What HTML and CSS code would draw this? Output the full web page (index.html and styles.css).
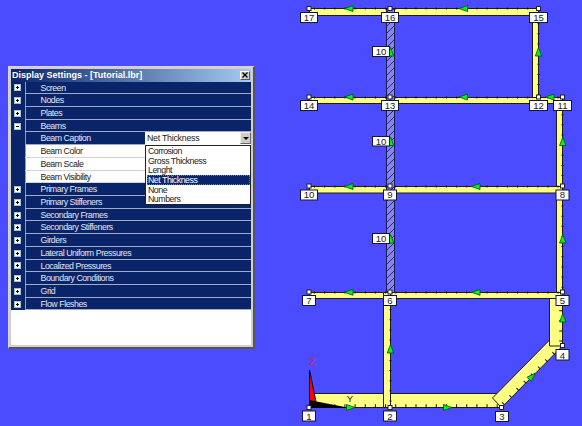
FILE: index.html
```
<!DOCTYPE html>
<html lang="en">
<head>
<meta charset="utf-8">
<title>Display Settings</title>
<link rel="stylesheet" href="styles.css">
</head>
<body>
<svg class="model" width="582" height="426" viewBox="0 0 582 426">
  <defs>
    <pattern id="hatch" width="7" height="7" patternUnits="userSpaceOnUse">
      <path d="M-1 8L8 -1M-1 1L1 -1M6 8L8 6" stroke="#29296e" stroke-width="1"/>
    </pattern>
    <path id="left" d="M-4.5 0L4 -3V3Z"/>
    <path id="up" d="M0 -4.5L3.2 4H-3.2Z"/>
    <path id="right" d="M4.5 0L-4 -3V3Z"/>
    <rect id="node" x="-2" y="-2" width="4" height="4"/>
  </defs>
  <g class="beam">
    <path d="M309.5 393.5H498L501.5 407.5H309.5Z"/>
    <path d="M492.5 398L553 336.500L562.500 346L501.500 407.500Z"/>
    <path d="M549.5 292.500H562.500V346H549.500Z"/>
    <path d="M556.500 97.500H562.500V292.500H556.500Z"/>
    <path d="M532.500 9H538.500V97.500H532.500Z"/>
    <path d="M309.500 8.500H538.500V15.500H309.500Z"/>
    <path d="M309.500 97.500H562.500V103.500H309.500Z"/>
    <path d="M309.500 186.500H562.500V193H309.500Z"/>
    <path d="M309.500 292.500H562.500V298.500H309.500Z"/>
    <path d="M383.500 292.500H390.500V407.500H383.500Z"/>
  </g>
  <g class="hatched">
    <path class="base" d="M386.500 9H394.500V292.500H386.500Z"/>
    <path fill="url(#hatch)" d="M386.500 9H394.500V292.500H386.500Z"/>
  </g>
  <g class="ticks">
    <path d="M314 8.500H538M314 97.500H562M314 186.500H562M314 292.500H562M538.500 13V97M562.500 104V290M390.500 299V405"/>
    <path class="long" d="M314 406H498M561 300V344M503 404L560 347"/>
  </g>
  <path d="M309.500 370V402H316Z" fill="#f00" stroke="#000"/>
  <path d="M309 400L350 408H309Z"/>
  <g class="arrows">
    <use href="#left" x="349" y="8.500"/><use href="#left" x="463.500" y="8.500"/>
    <use href="#left" x="349" y="97"/><use href="#left" x="463.500" y="97"/><use href="#left" x="550" y="97"/>
    <use href="#left" x="349" y="186.500"/><use href="#left" x="476" y="186.500"/>
    <use href="#left" x="349" y="292.300"/><use href="#left" x="476" y="292.300"/>
    <use href="#up" x="538.500" y="52"/><use href="#up" x="562.800" y="141.500"/><use href="#up" x="562.800" y="239"/>
    <use href="#up" x="562.800" y="318"/><use href="#up" x="390.500" y="349"/>
    <use href="#up" x="390.500" y="52"/><use href="#up" x="390.500" y="141.500"/><use href="#up" x="390.500" y="239"/>
    <use href="#right" x="350.500" y="407.500"/><use href="#right" x="447.500" y="407.500"/>
    <use href="#right" transform="translate(532 376.500) rotate(-45)"/>
  </g>
  <g class="nodes">
    <use href="#node" x="309" y="8.500"/><use href="#node" x="390" y="8.500"/><use href="#node" x="538.500" y="8.500"/>
    <use href="#node" x="309" y="97"/><use href="#node" x="390" y="97"/><use href="#node" x="538.500" y="97"/><use href="#node" x="562.500" y="97"/>
    <use href="#node" x="309" y="186"/><use href="#node" x="390" y="186"/><use href="#node" x="562.500" y="186"/>
    <use href="#node" x="309" y="292"/><use href="#node" x="390" y="292"/><use href="#node" x="562.500" y="292"/>
    <use href="#node" x="309" y="407.500"/><use href="#node" x="390" y="407.500"/><use href="#node" x="501.500" y="407.500"/><use href="#node" x="562.500" y="345.500"/>
  </g>
  <g class="tags">
    <rect x="300.500" y="12.500" width="17" height="10"/><rect x="381.500" y="12.500" width="17" height="10"/><rect x="529.500" y="12.500" width="18" height="10"/>
    <rect x="300.500" y="100.500" width="17" height="10"/><rect x="381.500" y="100.500" width="17" height="10"/><rect x="529.500" y="100.500" width="18" height="10"/><rect x="553.500" y="100.500" width="18" height="10"/>
    <rect x="300.500" y="190" width="17" height="10"/><rect x="383.500" y="190" width="13" height="10"/><rect x="556" y="190" width="13" height="10"/>
    <rect x="302.500" y="295.500" width="13" height="10"/><rect x="383.500" y="295.500" width="13" height="10"/><rect x="556" y="295.500" width="13" height="10"/>
    <rect x="302.500" y="411" width="13" height="10"/><rect x="383.500" y="411" width="13" height="10"/><rect x="495.500" y="411.500" width="13" height="10"/><rect x="556" y="349.500" width="13" height="10.500"/>
    <rect x="372.500" y="46.500" width="17" height="10"/><rect x="372.500" y="136.500" width="17" height="9.500"/><rect x="372.500" y="233.500" width="17" height="10"/>
  </g>
  <g class="labels">
    <text x="309" y="20.500">17</text><text x="390" y="20.500">16</text><text x="538.500" y="20.500">15</text>
    <text x="309" y="109">14</text><text x="390" y="109">13</text><text x="538.500" y="109">12</text><text x="562.500" y="109">11</text>
    <text x="309" y="198">10</text><text x="390" y="198">9</text><text x="562.500" y="198">8</text>
    <text x="309" y="304">7</text><text x="390" y="304">6</text><text x="562.500" y="304">5</text>
    <text x="309" y="419.500">1</text><text x="390" y="419.500">2</text><text x="502" y="420">3</text><text x="562.500" y="358.500">4</text>
    <text x="381" y="55">10</text><text x="381" y="144.500">10</text><text x="381" y="242">10</text>
    <text x="350" y="402">Y</text><text class="z" x="312.500" y="365">Z</text>
  </g>
</svg>

<section class="window">
  <header class="titlebar">
    <span>Display Settings - [Tutorial.lbr]</span>
    <span class="close"><svg width="6" height="6" viewBox="0 0 6 6"><path d="M.5 .5L5.500 5.500M5.500 .5L.5 5.500" stroke="#000" stroke-width="1.400"/></svg></span>
  </header>
  <div class="tree">
    <div class="row"><i class="box plus"></i><span>Screen</span></div>
    <div class="row"><i class="box plus"></i><span>Nodes</span></div>
    <div class="row"><i class="box plus"></i><span>Plates</span></div>
    <div class="row"><i class="box"></i><span>Beams</span></div>
    <div class="row"><span>Beam Caption</span>
      <div class="combo"><b>Net Thickness</b><i class="drop"></i>
        <ul class="menu">
          <li>Corrosion</li><li>Gross Thickness</li><li>Lenght</li><li class="on">Net Thickness</li><li>None</li><li>Numbers</li>
        </ul>
      </div>
    </div>
    <div class="row leaf"><span>Beam Color</span></div>
    <div class="row leaf"><span>Beam Scale</span></div>
    <div class="row leaf"><span>Beam Visibility</span></div>
    <div class="row"><i class="box plus"></i><span>Primary Frames</span></div>
    <div class="row"><i class="box plus"></i><span>Primary Stiffeners</span></div>
    <div class="row"><i class="box plus"></i><span>Secondary Frames</span></div>
    <div class="row"><i class="box plus"></i><span>Secondary Stiffeners</span></div>
    <div class="row"><i class="box plus"></i><span>Girders</span></div>
    <div class="row"><i class="box plus"></i><span>Lateral Uniform Pressures</span></div>
    <div class="row"><i class="box plus"></i><span>Localized Pressures</span></div>
    <div class="row"><i class="box plus"></i><span>Boundary Conditions</span></div>
    <div class="row"><i class="box plus"></i><span>Grid</span></div>
    <div class="row"><i class="box plus"></i><span>Flow Fleshes</span></div>
  </div>
</section>
</body>
</html>
```
FILE: styles.css
```
* { box-sizing: border-box; }
body {
  margin: 0;
  width: 582px;
  height: 426px;
  overflow: hidden;
  position: relative;
  background: #4b4bff;
  font-family: "Liberation Sans", Arial, sans-serif;
  font-size: 8.8px;
}
.model { display: block; }
.beam path { fill: #ffff84; stroke: #1c1c20; stroke-width: 1; }
.hatched path { stroke: #1c1c48; }
.hatched .base { fill: #8484f4; }
.ticks path { fill: none; stroke: #111; stroke-width: 2; stroke-dasharray: 1 9.15; }
.ticks .long { stroke-width: 3.5; }
.arrows use { fill: #00f020; stroke: #064d0c; stroke-width: .8; }
.nodes use { fill: #fff; stroke: #222; stroke-width: 1; }
.tags rect { fill: #fff; stroke: #161630; stroke-width: 1; }
.labels text { font-size: 9.6px; text-anchor: middle; fill: #222; }
.labels .z { fill: #f01840; }

.window {
  position: absolute;
  left: 8px;
  top: 66px;
  width: 247px;
  height: 283px;
  padding: 2px;
  background: #fff;
  border: 1px solid #d8d5cc;
  border-right: 2px solid #55555c;
  border-bottom: 2px solid #55555c;
  box-shadow: inset 0 0 0 2px #d4d0c8;
}
.titlebar {
  display: flex;
  align-items: center;
  justify-content: space-between;
  height: 12.5px;
  padding: 0 1px;
  background: linear-gradient(90deg, #0a246a, #a6caf0);
  color: #fff;
  font: bold 9px "Liberation Sans", Arial, sans-serif;
  white-space: nowrap;
}
.close {
  display: flex;
  align-items: center;
  justify-content: center;
  width: 10px;
  height: 9px;
  background: #d4d0c8;
  border: 1px solid #fff;
  border-right-color: #555;
  border-bottom-color: #555;
}
.tree { display: flex; flex-direction: column; width: 240px; }
.row {
  display: grid;
  grid-template-columns: 14px 120px 1fr;
  height: 12.72px;
  line-height: 12.5px;
  background: #0a246a;
  color: #e4e7f2;
}
.row > span { grid-column: 2; grid-row: 1; padding-left: 14.5px; white-space: nowrap; border-left: 1px solid #8c98bd; letter-spacing: -.46px; }
.row::after {
  content: "";
  grid-column: 2 / 4;
  grid-row: 1;
  align-self: end;
  height: 1px;
  background: #a3abc4;
}
.leaf { background: linear-gradient(90deg, #0a246a 14px, #fff 14px); color: #222; }
.leaf::after { background: #d2d2d2; }
.box {
  grid-column: 1;
  grid-row: 1;
  align-self: center;
  justify-self: start;
  margin-left: 3px;
  width: 7px;
  height: 7px;
  border: 1px solid #a9c4c4;
  background: linear-gradient(#000, #000) center / 3px 1px no-repeat, #fff;
}
.plus { background: linear-gradient(#000, #000) center / 3px 1px no-repeat, linear-gradient(#000, #000) center / 1px 3px no-repeat, #fff; }
.combo {
  grid-column: 3;
  grid-row: 1;
  position: relative;
  z-index: 1;
  display: flex;
  justify-content: space-between;
  background: #fff;
  color: #222;
  letter-spacing: -.25px;
}
.combo b { font-weight: normal; padding-left: 2px; white-space: nowrap; }
.drop {
  display: flex;
  align-items: center;
  justify-content: center;
  width: 11px;
  height: 12px;
  background: #d0cdc6;
  border: 1px solid #eee;
  border-right-color: #666;
  border-bottom-color: #666;
}
.drop::before { content: ""; border: 3px solid transparent; border-top: 3px solid #000; border-bottom: 0; }
.menu {
  position: absolute;
  top: 12.500px;
  left: 0;
  width: 106px;
  height: 60px;
  margin: 0;
  padding: 0 0 0 1px;
  list-style: none;
  background: #fff;
  border: 1px solid #222;
  letter-spacing: -.48px;
}
.menu li { height: 9.700px; line-height: 10.200px; padding-left: 1px; }
.menu .on { background: #0a246a; color: #fff; outline: 1px dotted #76769a; outline-offset: -1px; }
```
